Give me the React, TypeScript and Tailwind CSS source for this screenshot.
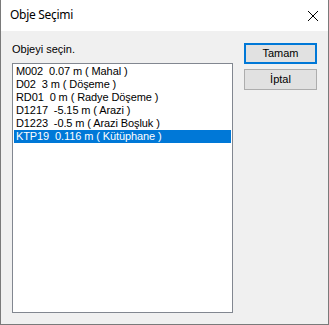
import React, { useState } from 'react';

const ITEMS = [
  'M002  0.07 m ( Mahal )',
  'D02  3 m ( Döşeme )',
  'RD01  0 m ( Radye Döşeme )',
  'D1217  -5.15 m ( Arazi )',
  'D1223  -0.5 m ( Arazi Boşluk )',
  'KTP19  0.116 m ( Kütüphane )',
];

export default function App() {
  const [selected, setSelected] = useState(5);

  return (
    <div className="w-[329px] h-[325px] flex flex-col bg-[#f0f0f0] border border-[#7a7a7a] border-t-0 overflow-hidden">
      {/* title bar */}
      <div className="h-[31px] shrink-0 bg-white flex items-center justify-between pl-[9px] pr-[8px]">
        <span className="text-[12px] tracking-[-0.3px] text-black font-['Noto_Sans',sans-serif] mt-[-1px]">Obje Seçimi</span>
        <svg width="12" height="12" viewBox="0 0 12 12" className="mr-[1px] mt-[1px]">
          <path d="M1 1 L11 11 M11 1 L1 11" stroke="#000" strokeWidth="1" />
        </svg>
      </div>

      <div className="flex-1 flex pl-[11px] pr-[11px] pt-[11px] pb-[11px] gap-[11px] font-['Liberation_Sans',sans-serif] text-[11px] text-black">
        <div className="flex flex-col w-[222px]">
          <div className="h-[21px] leading-[13px] pt-[1px]">Objeyi seçin.</div>
          <div className="flex-1 bg-white border border-[#828790] p-[1px]">
            {ITEMS.map((t, i) => (
              <div
                key={t}
                onClick={() => setSelected(i)}
                className={`h-[13px] leading-[13px] pl-[2px] whitespace-pre tracking-[-0.1px] ${
                  i === selected ? 'bg-[#0078d7] text-white' : ''
                }`}
              >
                {t}
              </div>
            ))}
          </div>
        </div>

        <div className="flex flex-col gap-[5px] pt-[1px]">
          <button className="w-[73px] h-[21px] bg-[#e1e1e1] border-2 border-[#0078d7] leading-[13px]">
            Tamam
          </button>
          <button className="w-[73px] h-[21px] bg-[#e1e1e1] border border-[#adadad] leading-[13px]">
            İptal
          </button>
        </div>
      </div>
    </div>
  );
}
